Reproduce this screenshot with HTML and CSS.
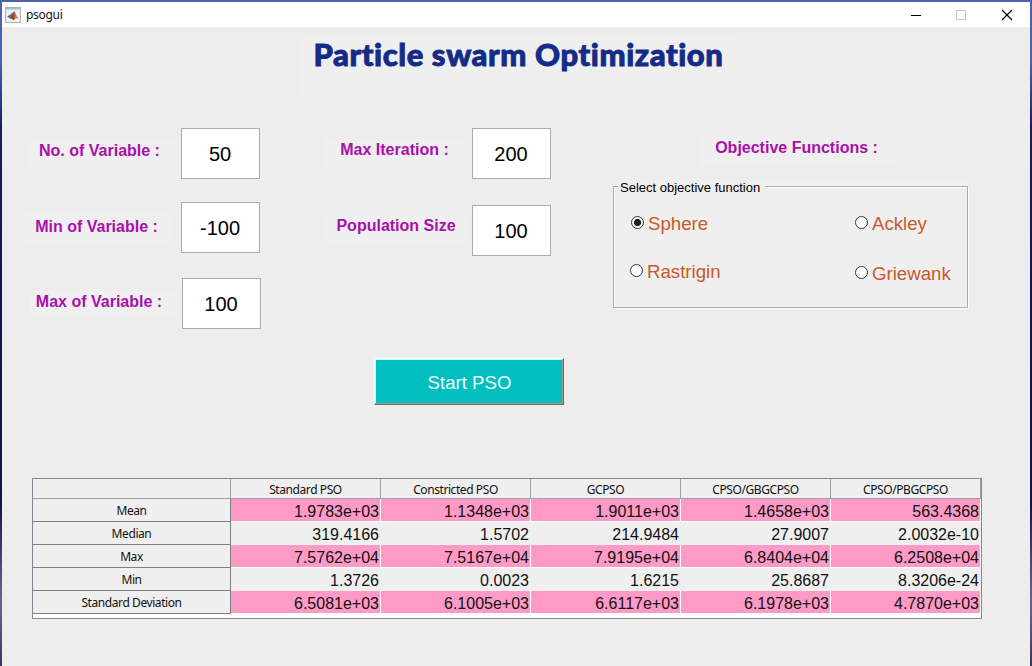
FILE: index.html
```
<!DOCTYPE html>
<html lang="en">
<head>
<meta charset="utf-8">
<title>psogui</title>
<link rel="stylesheet" href="styles.css">
</head>
<body>
<div class="window">
  <header class="titlebar">
    <svg class="app-icon" width="16" height="16" viewBox="0 0 16 16">
      <defs><linearGradient id="flame" x1="0" x2="1"><stop offset="0" stop-color="#7a2a20"/><stop offset=".5" stop-color="#c9481e"/><stop offset=".7" stop-color="#e8883a"/><stop offset="1" stop-color="#b03a1c"/></linearGradient></defs>
      <rect x=".5" y=".5" width="15" height="15" fill="#eef0f2" stroke="#a9b0b8"/>
      <path d="M1 1h14v1.5H1z" fill="#9fc0d8"/>
      <path d="M2 9.5 5.5 7.6 8.8 4.6 8 9 5.2 11.8Z" fill="#3f78a8"/>
      <path d="M5.2 11.8 7.3 8.2 9 4.2C10.3 4.4 11.3 9 13.6 12 11.8 10.9 10.8 10.9 8.3 13.4 7.8 12.2 6.8 11.5 5.2 11.8Z" fill="url(#flame)"/>
    </svg>
    <span class="app-name">psogui</span>
    <svg class="controls" width="106" height="12" viewBox="0 0 106 12">
      <path d="M0 6.5H10" stroke="#000"/>
      <rect x="45.5" y="1.5" width="9" height="9" fill="none" stroke="#c9c9c9"/>
      <path d="M91 1 101 11M101 1 91 11" stroke="#000" stroke-width="1.2"/>
    </svg>
  </header>
  <main class="content">
    <h1 class="heading"><span>Particle swarm Optimization</span></h1>
    <div class="form">
      <section class="col variables">
        <div class="row r1"><label class="tag">No. of Variable :</label><input class="field" value="50"></div>
        <div class="row r2"><label class="tag">Min of Variable :</label><input class="field" value="-100"></div>
        <div class="row r3"><label class="tag">Max of Variable :</label><input class="field" value="100"></div>
      </section>
      <section class="col settings">
        <div class="row s1"><label class="tag">Max Iteration :</label><input class="field" value="200"></div>
        <div class="row s2"><label class="tag">Population Size</label><input class="field" value="100"></div>
      </section>
      <section class="col objective">
        <div class="tag objective-tag">Objective Functions :</div>
        <div class="group">
          <div class="legend"><span>Select objective function</span></div>
          <div class="options">
            <label class="option o1"><i class="radio on"></i>Sphere</label>
            <label class="option o2"><i class="radio"></i>Ackley</label>
            <label class="option o3"><i class="radio"></i>Rastrigin</label>
            <label class="option o4"><i class="radio"></i>Griewank</label>
          </div>
        </div>
      </section>
    </div>
    <button class="start">Start PSO</button>
    <div class="table">
      <div class="tr head"><b></b><b>Standard PSO</b><b>Constricted PSO</b><b>GCPSO</b><b>CPSO/GBGCPSO</b><b>CPSO/PBGCPSO</b></div>
      <div class="tr pink"><b>Mean</b><span>1.9783e+03</span><span>1.1348e+03</span><span>1.9011e+03</span><span>1.4658e+03</span><span>563.4368</span></div>
      <div class="tr"><b>Median</b><span>319.4166</span><span>1.5702</span><span>214.9484</span><span>27.9007</span><span>2.0032e-10</span></div>
      <div class="tr pink"><b>Max</b><span>7.5762e+04</span><span>7.5167e+04</span><span>7.9195e+04</span><span>6.8404e+04</span><span>6.2508e+04</span></div>
      <div class="tr"><b>Min</b><span>1.3726</span><span>0.0023</span><span>1.6215</span><span>25.8687</span><span>8.3206e-24</span></div>
      <div class="tr pink"><b>Standard Deviation</b><span>6.5081e+03</span><span>6.1005e+03</span><span>6.6117e+03</span><span>6.1978e+03</span><span>4.7870e+03</span></div>
    </div>
  </main>
</div>
</body>
</html>
```
FILE: styles.css
```
*, ::before, ::after { box-sizing: border-box; }
body { margin: 0; font-family: "Liberation Sans", Arial, sans-serif; overflow: hidden; }
.window {
  width: 1032px; height: 666px; padding: 2px 2px 0;
  background: linear-gradient(#4c61b0 0 60px, #19195c 130px, #101050 500px, #6f6290 600px, #3c3262);
}
.titlebar { display: flex; align-items: center; height: 25px; padding: 0 13px 0 3px; background: #fff; }
.app-name { margin-left: 5px; font: 12px/16px "Noto Sans", sans-serif; letter-spacing: -.3px; color: #111; }
.controls { margin-left: auto; }
.content { height: 639px; padding-top: 11px; background: #ededed; }
.heading {
  width: 435px; height: 59px; margin: 0 0 0 299px; background: #efefef; color: #142b87;
  font: 900 31px/32px Lato, sans-serif; text-align: center; white-space: nowrap;
  font-variant-ligatures: none; letter-spacing: .58px; -webkit-text-stroke: .9px #142b87;
}
.form { display: flex; height: 230px; margin-top: 31px; }
.col { flex: none; }
.variables { width: 321px; }
.settings { width: 290px; }
.row { display: flex; height: 51px; }
.row > * { flex: none; }
.r1 { margin-left: 26px; }
.r2 { margin: 23px 0 0 23px; }
.r3 { margin: 25px 0 0 28px; }
.s1 { margin-left: 2px; }
.s2 { margin-top: 26px; }
.tag {
  width: 147px; height: 28px; margin-top: 12px; padding: 1px 4px 0 0; background: #efefef; color: #aa10aa;
  font-size: 16px; font-weight: bold; line-height: 20px; text-align: center; white-space: nowrap;
}
.field {
  width: 79px; height: 51px; margin-left: 6px; padding: 2px 1px 0 0; border: 1px solid #ababab;
  background: #fff; color: #000; font: 20px "Liberation Sans", sans-serif; text-align: center;
}
.r2 .field { margin-left: 9px; }
.r2 .tag { padding-top: 3px; }
.r3 .field { margin-left: 5px; }
.r3 .tag { padding: 2px 9px 0 0; }
.s1 .tag { margin-top: 11px; width: 139px; padding-right: 0; }
.s1 .field { margin-left: 8px; }
.s2 .tag { margin-top: 10px; width: 146px; padding-right: 0; }
.s2 .field { margin-left: 3px; }
.objective-tag { width: 195px; margin: 9px 0 0 88px; }
.group { width: 355px; height: 128px; margin-top: 15px; display: flex; flex-direction: column; background: #efefef; }
.legend { display: flex; align-items: center; height: 14px; font-size: 13px; line-height: 14px; white-space: nowrap; }
.legend span { padding-top: 1px; }
.legend::before { content: ""; width: 5px; height: 2px; margin: 0 2px 0 0; background: #ababab; border-bottom: 1px solid #fff; }
.legend::after { content: ""; flex: 1; height: 2px; margin-left: 5px; background: #ababab; border-bottom: 1px solid #fff; }
.options {
  flex: 1; display: grid; grid-template-columns: 224px 1fr; grid-template-rows: 49px 47px; padding: 24px 0 0 17px;
  margin-top: -7px; border: solid #ababab; border-width: 0 1px 1px; box-shadow: 1px 1px #fff, inset 1px 0 #fff;
}
.option { display: flex; align-items: center; gap: 4px; height: 26px; color: #c85a2c; font-size: 18.67px; }
.o3 { margin: -1px 0 0 -1px; }
.o4 { margin-top: 1px; }
.radio { width: 13px; height: 13px; margin-top: -3px; border: 1px solid #333; border-radius: 50%; background: #fff; }
.on { background: radial-gradient(circle, #222 0 3.2px, #fff 4px); }
.start {
  display: block; width: 190px; height: 47px; margin: 0 0 0 372px; padding: 3px 1px 0 2px;
  border: 1px solid; border-color: #e8ffff #696969 #696969 #e8ffff;
  box-shadow: inset -1px -1px #a0a0a0, inset 1px 1px #c8f4f4;
  background: #02bfbf; color: #e8ffff; font: 18.67px "Liberation Sans", sans-serif;
}
.table { width: 950px; height: 141px; margin: 73px 0 0 30px; border: 1px solid #828790; background: #fff; }
.tr { display: grid; grid-template-columns: 198px repeat(5, 150px); grid-template-rows: 100%; width: 948px; height: 23px; line-height: 25px; }
.tr b {
  border: solid #808080; border-width: 0 1px 1px 0; background: #efefef;
  font: 12px/23px "Noto Sans", sans-serif; letter-spacing: -.42px; text-align: center; color: #111;
}
.tr span { border: solid #fff; border-width: 0 1px 1px 0; padding-right: 1px; background: #efefef; font-size: 16px; text-align: right; color: #111; }
.pink span { background: #ff9ac6; }
.tr:not(.pink) span { border-color: #efefef; }
.head { height: 20px; }
.head b { border-color: #a0a0a0; line-height: 21px; }
```
